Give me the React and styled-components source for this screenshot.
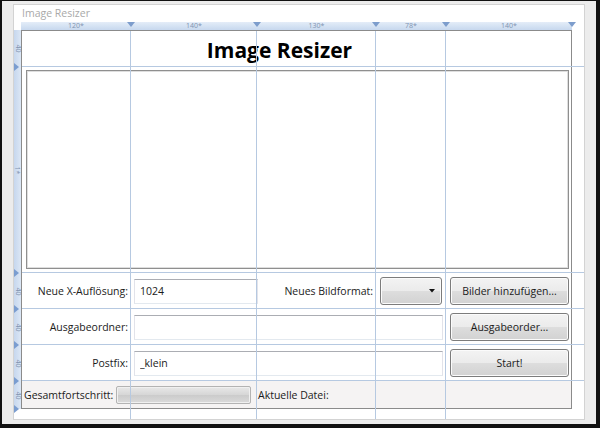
import React from "react";
import styled, { createGlobalStyle } from "styled-components";

const GlobalStyle = createGlobalStyle`
  html, body {
    margin: 0;
    padding: 0;
    background: #101010;
  }
  body {
    font-family: "Open Sans", "Liberation Sans", sans-serif;
  }
`;

const COLS = [109, 126, 119, 70, 125];
const ROWS = [36, 206, 36, 36, 36, 27];
const LINE = "#b6c9e1";

const Frame = styled.div`
  box-sizing: border-box;
  width: 600px;
  height: 428px;
  background: #ececec;
  border-style: solid;
  border-color: #111;
  border-width: 1px 4px 4px 2px;
  padding: 3px 0 0 11px;
`;

const Window = styled.div`
  box-sizing: border-box;
  width: 572px;
  height: 416px;
  background: #fff;
  border: 1px solid #d3d3d3;
  display: flex;
  flex-direction: column;
  overflow: hidden;
`;

const Caption = styled.div`
  height: 17px;
  line-height: 17px;
  padding-left: 8px;
  font-size: 10.5px;
  color: #a9a9a9;
`;

const Designer = styled.div`
  display: grid;
  grid-template-columns: 7px 551px;
  grid-template-rows: 8px 379px;
`;

const Corner = styled.div``;

const TopRuler = styled.div`
  display: grid;
  grid-template-columns: 110px 126px 119px 70px 126px;
  background: linear-gradient(#e4edf8, #c7d8ee);
`;

const TopSegment = styled.div`
  position: relative;
  display: flex;
  align-items: center;
  justify-content: center;
  font-size: 7px;
  line-height: 8px;
  color: #8093b0;

  &::after {
    content: "";
    position: absolute;
    right: -4px;
    top: 0;
    border-left: 4px solid transparent;
    border-right: 4px solid transparent;
    border-top: 5px solid #7d9dcc;
  }
`;

const SideRuler = styled.div`
  display: grid;
  grid-template-rows: 37px 206px 36px 36px 36px 28px;
  background: linear-gradient(to right, #c6d7ee, #dce7f5);
`;

const SideSegment = styled.div`
  position: relative;
  display: flex;
  align-items: center;
  justify-content: center;
  font-size: 7px;
  color: #8093b0;

  &::after {
    content: "";
    position: absolute;
    left: 0;
    bottom: -4px;
    border-top: 4px solid transparent;
    border-bottom: 4px solid transparent;
    border-left: 5px solid #7a9dd0;
  }
`;

const SideLabel = styled.span`
  transform: rotate(90deg);
`;

const DesignGrid = styled.div`
  position: relative;
  box-sizing: border-box;
  display: grid;
  grid-template-columns: ${COLS.map((c) => c + "px").join(" ")};
  grid-template-rows: ${ROWS.map((r) => r + "px").join(" ")};
  border: 1px solid #8b8b8b;
  font-size: 10.5px;
  color: #1b1b1b;
`;

const GridLines = styled.div`
  position: absolute;
  top: 0;
  left: 0;
  right: -13px;
  bottom: -11px;
  display: grid;
  grid-template-columns: ${COLS.map((c) => c + "px").join(" ")} 1fr;
  grid-template-rows: ${ROWS.map((r) => r + "px").join(" ")} 1fr;
  pointer-events: none;
`;

const LineCell = styled.div`
  border-right: ${(p) => (p.$right ? `1px solid ${LINE}` : "none")};
  border-bottom: ${(p) => (p.$bottom ? `1px solid ${LINE}` : "none")};
`;

const Title = styled.div`
  grid-column: 1 / -1;
  display: flex;
  align-items: center;
  justify-content: center;
  padding: 1px 34px 0 0;
  font-size: 21px;
  font-weight: 700;
  color: #000;
`;

const ImageList = styled.div`
  grid-column: 1 / -1;
  margin: 3px 2px 4px 4px;
  border: 1px solid #8f8f8f;
  box-shadow: inset 0 0 0 1px #dedede;
  background: #fff;
`;

const FieldLabel = styled.div`
  grid-column: ${(p) => p.$col} / span 1;
  display: flex;
  align-items: center;
  justify-content: flex-end;
  padding-right: 3px;
  white-space: nowrap;
`;

const TextBox = styled.input`
  grid-column: 2 / span ${(p) => p.$span};
  align-self: center;
  box-sizing: border-box;
  height: 25px;
  min-width: 0;
  margin: 0 ${(p) => (p.$span > 1 ? 3 : -1)}px 0 3px;
  padding: 0 5px;
  border: 1px solid #e2e3ea;
  border-top-color: #abadb3;
  border-bottom-color: #e3e9ef;
  background: #fff;
  font: inherit;
  color: #1b1b1b;
  outline: none;
`;

const ComboBox = styled.div`
  grid-column: 4;
  align-self: center;
  height: 28px;
  margin: 0 4px;
  box-sizing: border-box;
  display: flex;
  align-items: center;
  justify-content: flex-end;
  padding-right: 6px;
  border: 1px solid #7c7c7c;
  border-radius: 3px;
  background: linear-gradient(#f3f3f3 0%, #ebebeb 50%, #dddddd 51%, #d2d2d2 100%);
  box-shadow: inset 0 0 0 1px #fbfbfb;
`;

const Button = styled.div`
  grid-column: 5;
  align-self: center;
  height: 28px;
  margin: 0 2px 0 4px;
  box-sizing: border-box;
  display: flex;
  align-items: center;
  justify-content: center;
  border: 1px solid #7c7c7c;
  border-radius: 3px;
  background: linear-gradient(#f3f3f3 0%, #ebebeb 50%, #dddddd 51%, #d2d2d2 100%);
  box-shadow: inset 0 0 0 1px #fbfbfb;
  white-space: nowrap;
`;

const StatusRow = styled.div`
  grid-column: 1 / -1;
  display: grid;
  grid-template-columns: subgrid;
  background: #f5f3f3;
`;

const StatusGroup = styled.div`
  grid-column: ${(p) => p.$col} / span ${(p) => p.$span};
  display: flex;
  align-items: center;
  padding-left: ${(p) => p.$indent}px;
  white-space: nowrap;
`;

const StatusLabel = styled.span`
  flex: 0 0 ${(p) => p.$width}px;
`;

const ProgressBar = styled.div`
  width: 135px;
  height: 18px;
  box-sizing: border-box;
  border: 1px solid #b3b3b3;
  border-radius: 2px;
  background: linear-gradient(#e8e8e8 0%, #d6d6d6 50%, #cbcbcb 51%, #dadada 100%);
  box-shadow: inset 0 0 0 1px #f0f0f0;
`;

const rulerCols = ["120*", "140*", "130*", "78*", "140*"];
const rulerRows = ["40", "1*", "40", "40", "40", "40"];

function App() {
  const lines = [];
  for (let r = 0; r <= ROWS.length; r++) {
    for (let c = 0; c <= COLS.length; c++) {
      lines.push(
        <LineCell
          key={r + "-" + c}
          $right={c < COLS.length - 1}
          $bottom={r < ROWS.length - 1}
        />
      );
    }
  }

  return (
    <>
      <GlobalStyle />
      <Frame>
        <Window>
          <Caption>Image Resizer</Caption>
          <Designer>
            <Corner />
            <TopRuler>
              {rulerCols.map((c, i) => (
                <TopSegment key={i}>{c}</TopSegment>
              ))}
            </TopRuler>
            <SideRuler>
              {rulerRows.map((r, i) => (
                <SideSegment key={i}>
                  <SideLabel>{r}</SideLabel>
                </SideSegment>
              ))}
            </SideRuler>
            <DesignGrid>
              <Title>Image Resizer</Title>
              <ImageList />

              <FieldLabel $col={1}>Neue X-Auflösung:</FieldLabel>
              <TextBox $span={1} value="1024" readOnly />
              <FieldLabel $col={3}>Neues Bildformat:</FieldLabel>
              <ComboBox>
                <svg width="6" height="4" viewBox="0 0 6 4">
                  <path d="M0 0 L6 0 L3 3.5 Z" fill="#111" />
                </svg>
              </ComboBox>
              <Button>Bilder hinzufügen...</Button>

              <FieldLabel $col={1}>Ausgabeordner:</FieldLabel>
              <TextBox $span={3} value="" readOnly />
              <Button>Ausgabeorder...</Button>

              <FieldLabel $col={1}>Postfix:</FieldLabel>
              <TextBox $span={3} value="_klein" readOnly />
              <Button>Start!</Button>

              <StatusRow>
                <StatusGroup $col={1} $span={2} $indent={2}>
                  <StatusLabel $width={92}>Gesamtfortschritt:</StatusLabel>
                  <ProgressBar />
                </StatusGroup>
                <StatusGroup $col={3} $span={3} $indent={1}>
                  Aktuelle Datei:
                </StatusGroup>
              </StatusRow>

              <GridLines>{lines}</GridLines>
            </DesignGrid>
          </Designer>
        </Window>
      </Frame>
    </>
  );
}

export default App;
